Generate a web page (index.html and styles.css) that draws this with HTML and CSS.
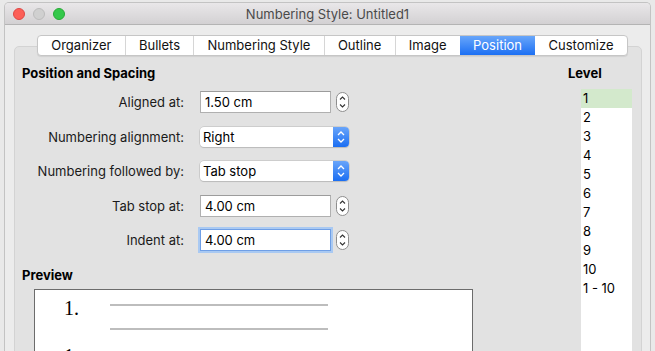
FILE: index.html
```html
<!DOCTYPE html>
<html lang="en">
<head>
    <meta charset="UTF-8">
    <meta name="viewport" content="width=device-width, initial-scale=1.0">
    <title>Numbering Style: Untitled1</title>
    <link rel="stylesheet" href="styles.css">
</head>
<body>

    <div class="window">
        <div class="titlebar">
            <div class="lights">
                <span class="light red"></span>
                <span class="light grey"></span>
                <span class="light green"></span>
            </div>
            <div class="title">Numbering Style: Untitled1</div>
            <div></div>
        </div>

        <div class="content">
            <div class="tabs">
                <div class="tab">Organizer</div>
                <div class="tab">Bullets</div>
                <div class="tab">Numbering Style</div>
                <div class="tab">Outline</div>
                <div class="tab">Image</div>
                <div class="tab active">Position</div>
                <div class="tab">Customize</div>
            </div>

            <div class="panel">
                <div class="main">
                    <h3>Position and Spacing</h3>
                    <div class="form">
                        <div class="label">Aligned at:</div>
                        <div class="input">1.50 cm</div>
                        <svg class="spin" width="13" height="20" viewBox="0 0 13 20"><rect x="0.5" y="0.5" width="12" height="19" rx="6" fill="#fff" stroke="#8e8e8e"/><path d="M4 7.5 L6.5 5 L9 7.5 M4 12.5 L6.5 15 L9 12.5" fill="none" stroke="#333" stroke-width="1.1"/></svg>

                        <div class="label">Numbering alignment:</div>
                        <div class="select"><span>Right</span><svg class="arrows" width="16" height="20" viewBox="0 0 16 20"><path d="M5 8 L8 5 L11 8 M5 12 L8 15 L11 12" fill="none" stroke="#fff" stroke-width="1.3"/></svg></div>

                        <div class="label">Numbering followed by:</div>
                        <div class="select"><span>Tab stop</span><svg class="arrows" width="16" height="20" viewBox="0 0 16 20"><path d="M5 8 L8 5 L11 8 M5 12 L8 15 L11 12" fill="none" stroke="#fff" stroke-width="1.3"/></svg></div>

                        <div class="label">Tab stop at:</div>
                        <div class="input">4.00 cm</div>
                        <svg class="spin" width="13" height="20" viewBox="0 0 13 20"><rect x="0.5" y="0.5" width="12" height="19" rx="6" fill="#fff" stroke="#8e8e8e"/><path d="M4 7.5 L6.5 5 L9 7.5 M4 12.5 L6.5 15 L9 12.5" fill="none" stroke="#333" stroke-width="1.1"/></svg>

                        <div class="label">Indent at:</div>
                        <div class="input focus">4.00 cm</div>
                        <svg class="spin" width="13" height="20" viewBox="0 0 13 20"><rect x="0.5" y="0.5" width="12" height="19" rx="6" fill="#fff" stroke="#8e8e8e"/><path d="M4 7.5 L6.5 5 L9 7.5 M4 12.5 L6.5 15 L9 12.5" fill="none" stroke="#333" stroke-width="1.1"/></svg>
                    </div>

                    <h3 class="preview-title">Preview</h3>
                    <div class="preview">
                        <div class="pv-item">
                            <div class="pv-num">1.</div>
                            <div class="pv-lines"><div class="pv-line"></div><div class="pv-line"></div></div>
                        </div>
                        <div class="pv-item">
                            <div class="pv-num">1.</div>
                            <div class="pv-lines"><div class="pv-line"></div><div class="pv-line"></div></div>
                        </div>
                    </div>
                </div>

                <div class="side">
                    <h3>Level</h3>
                    <ul class="levels">
                        <li class="selected">1</li>
                        <li>2</li>
                        <li>3</li>
                        <li>4</li>
                        <li>5</li>
                        <li>6</li>
                        <li>7</li>
                        <li>8</li>
                        <li>9</li>
                        <li>10</li>
                        <li>1 - 10</li>
                    </ul>
                </div>
            </div>
        </div>
    </div>

</body>
</html>
```

FILE: styles.css
```css
/* macOS style dialog */
html, body {
    margin: 0;
    padding: 0;
    height: 351px;
    overflow: hidden;
    background: #e9e9e9;
    font-family: Inter, 'Liberation Sans', sans-serif;
    font-size: 13px;
    color: #111;
}

.window {
    margin: 2px 0 0 4px;
    width: 645px;
    height: 360px;
    border: 1px solid #c3c3c3;
    border-bottom: none;
    border-radius: 5px 5px 0 0;
    background: #ececec;
    overflow: hidden;
}

.titlebar {
    height: 21px;
    display: grid;
    grid-template-columns: 1fr auto 1fr;
    align-items: center;
    background: linear-gradient(#e9e7e9, #d3d1d3);
    border-bottom: 1px solid #b4b4b4;
}

.lights {
    display: flex;
    gap: 8px;
    padding-left: 8px;
}

.light {
    width: 12px;
    height: 12px;
    border-radius: 50%;
    box-sizing: border-box;
}

.light.red {
    background: #fc5f57;
    border: 1px solid #df4744;
}

.light.grey {
    background: #d0d0d0;
    border: 1px solid #bcbcbc;
}

.light.green {
    background: #34c84a;
    border: 1px solid #27aa35;
}

.title {
    color: #4a4a4a;
    font-size: 13px;
}

.content {
    padding: 10px 8px 0 9px;
}

.tabs {
    display: flex;
    margin-left: 23px;
    width: max-content;
    height: 21px;
    background: #fff;
    border: 1px solid #c6c6c6;
    border-radius: 4px;
    box-sizing: border-box;
    position: relative;
    z-index: 1;
    margin-bottom: -10px;
    box-shadow: 0 1px 1px rgba(0, 0, 0, 0.08);
}

.tab {
    padding: 0 13.25px;
    line-height: 19px;
    color: #111;
    border-left: 1px solid #d6d6d6;
}

.tab:first-child {
    border-left: none;
}

.tab.active {
    background: linear-gradient(#68a6fa, #1c6ff3);
    color: #fff;
    border-left: none;
}

.tab.active + .tab {
    border-left: none;
}

.panel {
    display: flex;
    background: #e2e2e2;
    border: 1px solid #d3d3d3;
    border-radius: 5px;
    padding: 18px 9px 0 7px;
    height: 320px;
}

h3 {
    margin: 0;
    font-size: 13px;
    font-weight: 700;
    line-height: 16px;
    color: #000;
}

.main {
    flex: 1;
}

.form {
    margin-top: 4px;
    display: grid;
    grid-template-columns: 178px 131px 18px;
    grid-auto-rows: 34.5px;
    align-items: center;
}

.form .spin {
    justify-self: end;
}

.label {
    text-align: right;
    padding-right: 16px;
    color: #1a1a1a;
}

.input {
    height: 22px;
    line-height: 20px;
    box-sizing: border-box;
    background: #fff;
    border: 1px solid #b0b0b0;
    border-top-color: #9c9c9c;
    padding-left: 4px;
    color: #000;
}

.input.focus {
    border-color: #6f9fe6;
    box-shadow: 0 0 0 2px #a9c9f2;
}

.select {
    grid-column: 2 / 4;
    height: 20px;
    display: flex;
    justify-content: space-between;
    align-items: center;
    background: #fff;
    border-radius: 4px;
    box-shadow: 0 0 0 0.5px #b8b8b8, 0 1px 1px rgba(0, 0, 0, 0.15);
    overflow: hidden;
    padding-left: 3px;
    color: #000;
}

.arrows {
    background: linear-gradient(#69a5fa, #1b6ef2);
}

.preview-title {
    margin-top: 9px;
}

.preview {
    margin: 6px 0 0 12px;
    width: 439px;
    height: 120px;
    box-sizing: border-box;
    background: #fff;
    border: 1px solid #6c6c6c;
    padding: 7px 0 0 29px;
    display: flex;
    flex-direction: column;
    gap: 15px;
}

.pv-item {
    display: flex;
}

.pv-num {
    width: 46px;
    font-family: 'Liberation Serif', serif;
    font-size: 20px;
    line-height: 23px;
    color: #000;
}

.pv-lines {
    padding-top: 7px;
    display: flex;
    flex-direction: column;
    gap: 22px;
}

.pv-line {
    width: 218px;
    height: 2px;
    background: #bdbdbd;
}

.side {
    width: 64px;
}

.levels {
    list-style: none;
    margin: 8px 0 0 13px;
    padding: 0;
    width: 51px;
    height: 280px;
    background: #fff;
}

.levels li {
    line-height: 19px;
    padding-left: 2px;
    color: #000;
}

.levels li.selected {
    background: #d3e9cc;
}
```
